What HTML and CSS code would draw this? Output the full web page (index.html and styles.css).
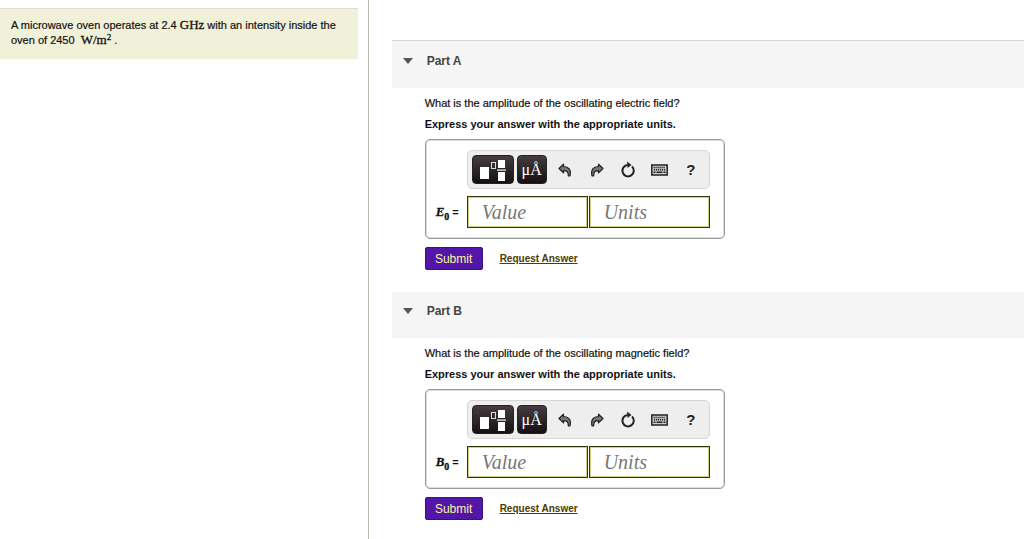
FILE: index.html
```html
<!DOCTYPE html>
<html lang="en">
<head>
  <meta charset="UTF-8" />
  <meta name="viewport" content="width=device-width, initial-scale=1.0"/>
  <title>Microwave Oven Intensity</title>
  <link rel="stylesheet" href="styles.css">
</head>
<body>
  <svg class="icon-defs" aria-hidden="true">
    <symbol id="icon-template" viewBox="0 0 28 24">
      <rect x="1" y="9" width="9" height="12" fill="#fff"/>
      <rect x="12.500" y="4.500" width="4" height="6" fill="none" stroke="#ddd"/>
      <rect x="19" y="2" width="7" height="8" fill="#fff"/>
      <rect x="18" y="11.500" width="9" height="1.200" fill="#fff"/>
      <rect x="19" y="14" width="7" height="9" fill="#fff"/>
    </symbol>
    <symbol id="icon-undo" viewBox="0 0 14 14">
      <path d="M1 5.500 5.500 1.200v2.300c5 0 8 3 6.500 9.300h-1.700C10.500 9 9 7.600 5.500 7.600v2.300z" fill="#777" stroke="#222" stroke-width="1.200" stroke-linejoin="round"/>
    </symbol>
    <symbol id="icon-reset" viewBox="0 0 16 18">
      <path d="M12 5.500A5.700 5.700 0 1 1 7.500 4" fill="none" stroke="#222" stroke-width="2"/>
      <path d="M7 .5 11.500 4 7.500 7z" fill="#222"/>
    </symbol>
    <symbol id="icon-keyboard" viewBox="0 0 17 12">
      <rect x=".8" y="1" width="15.400" height="10" fill="#ccc" stroke="#222" stroke-width="1.500"/>
      <path d="M2.500 3.500h12M3 5.800h12" stroke="#222" stroke-width="1.400" stroke-dasharray="1.200 .8"/>
      <path d="M2.500 8.300h2M5.500 8.300h6M12.500 8.300h2" stroke="#222" stroke-width="1.400"/>
    </symbol>
  </svg>

  <div class="page">
    <aside class="sidebar">
      <div class="intro">A microwave oven operates at 2.4 <span class="math">GHz</span> with an intensity inside the oven of 2450 &nbsp;<span class="math">W/m<sup>2</sup></span> .</div>
    </aside>

    <main class="content">
      <section class="part">
        <header class="part-header part-header-first">
          <span class="arrow"></span>
          <h2>Part A</h2>
        </header>
        <form class="part-body">
          <p class="question">What is the amplitude of the oscillating electric field?</p>
          <p class="instruction">Express your answer with the appropriate units.</p>
          <div class="answer-box">
            <div class="toolbar">
              <button type="button" class="tool-dark tool-template" aria-label="Templates"><svg><use href="#icon-template"/></svg></button>
              <button type="button" class="tool-dark tool-units">μÅ</button>
              <button type="button" class="tool" aria-label="Undo"><svg><use href="#icon-undo"/></svg></button>
              <button type="button" class="tool" aria-label="Redo"><svg class="flip"><use href="#icon-undo"/></svg></button>
              <button type="button" class="tool" aria-label="Reset"><svg class="icon-reset"><use href="#icon-reset"/></svg></button>
              <button type="button" class="tool" aria-label="Keyboard shortcuts"><svg class="icon-keyboard"><use href="#icon-keyboard"/></svg></button>
              <button type="button" class="tool">?</button>
            </div>
            <label class="variable" for="valueA"><span class="math"><i>E</i><sub>0</sub></span> =</label>
            <div class="fields">
              <input type="text" id="valueA" placeholder="Value">
              <input type="text" id="unitsA" placeholder="Units" aria-label="Units">
            </div>
          </div>
          <div class="actions">
            <button type="submit" class="submit">Submit</button>
            <a href="#">Request Answer</a>
          </div>
        </form>
      </section>

      <section class="part">
        <header class="part-header">
          <span class="arrow"></span>
          <h2>Part B</h2>
        </header>
        <form class="part-body">
          <p class="question">What is the amplitude of the oscillating magnetic field?</p>
          <p class="instruction">Express your answer with the appropriate units.</p>
          <div class="answer-box">
            <div class="toolbar">
              <button type="button" class="tool-dark tool-template" aria-label="Templates"><svg><use href="#icon-template"/></svg></button>
              <button type="button" class="tool-dark tool-units">μÅ</button>
              <button type="button" class="tool" aria-label="Undo"><svg><use href="#icon-undo"/></svg></button>
              <button type="button" class="tool" aria-label="Redo"><svg class="flip"><use href="#icon-undo"/></svg></button>
              <button type="button" class="tool" aria-label="Reset"><svg class="icon-reset"><use href="#icon-reset"/></svg></button>
              <button type="button" class="tool" aria-label="Keyboard shortcuts"><svg class="icon-keyboard"><use href="#icon-keyboard"/></svg></button>
              <button type="button" class="tool">?</button>
            </div>
            <label class="variable" for="valueB"><span class="math"><i>B</i><sub>0</sub></span> =</label>
            <div class="fields">
              <input type="text" id="valueB" placeholder="Value">
              <input type="text" id="unitsB" placeholder="Units" aria-label="Units">
            </div>
          </div>
          <div class="actions">
            <button type="submit" class="submit">Submit</button>
            <a href="#">Request Answer</a>
          </div>
        </form>
      </section>
    </main>
  </div>
</body>
</html>
```
FILE: styles.css
```css
:root {
  --text: #111;
  --intro-bg: #f1f1d9;
  --header-bg: #f5f5f5;
  --border: #999;
  --field-border: #36350a;
  --accent: #5217a8;
}

* {
  margin: 0;
  padding: 0;
  box-sizing: border-box;
}

body {
  background: #fff;
  color: var(--text);
  font-family: "Liberation Sans", Arial, sans-serif;
  font-size: 11px;
  line-height: 15px;
}

.icon-defs {
  display: none;
}

.page {
  display: flex;
  min-height: 100vh;
}

.sidebar {
  width: 36%;
  flex-shrink: 0;
  padding: 8px 10px 0 0;
  border-right: 1px solid #b8b8ac;
}

.intro {
  background: var(--intro-bg);
  border-top: 1px solid #dcdccb;
  padding: 9px 16px 11px 11px;
  -webkit-text-stroke: 0.2px var(--text);
}

.math {
  font-family: "Liberation Serif", "Times New Roman", serif;
  font-size: 13px;
  line-height: 1;
  -webkit-text-stroke: 0.3px var(--text);
}

.math sup,
.math sub {
  font-size: 10px;
  line-height: 0;
}

.math sup {
  font-size: 9px;
  vertical-align: 4px;
}

.content {
  flex: 1;
  padding: 40px 0 0 23px;
}

.part {
  margin-bottom: 22px;
}

.part-header {
  display: flex;
  align-items: flex-start;
  gap: 14px;
  height: 46px;
  padding: 11px 11px 0;
  background: var(--header-bg);
}

.part-header-first {
  height: 48px;
  padding-top: 12px;
  border-top: 1px solid #d4d4d4;
}

.part-header h2 {
  font-size: 12px;
  line-height: 16px;
  color: #444;
}

.arrow {
  margin-top: 5px;
  border: 5px solid transparent;
  border-top: 6px solid #555;
  border-bottom: none;
}

.part-body {
  padding: 8px 0 0 33px;
}

.question {
  -webkit-text-stroke: 0.2px var(--text);
}

.instruction {
  margin: 6px 0 7px;
  font-weight: bold;
}

.answer-box {
  display: inline-grid;
  grid-template-columns: 31px 243px;
  row-gap: 7px;
  align-items: center;
  padding: 10px 14px 10px 10px;
  border: 1px solid var(--border);
  box-shadow: inset 0 0 0 1px #ddd;
  border-radius: 5px;
  vertical-align: top;
}

.toolbar {
  grid-column: 2;
  display: flex;
  align-items: center;
  height: 39px;
  padding: 0 2px 0 4px;
  background: #eee;
  border: 1px solid #d6d6d6;
  border-radius: 5px;
}

.toolbar button {
  height: 29px;
  border: none;
  background: none;
  display: flex;
  align-items: center;
  justify-content: center;
  cursor: pointer;
}

.toolbar .tool-dark {
  background: linear-gradient(#463c3f, #151013);
  border: 1px solid #222;
  border-radius: 4px;
  color: #fff;
}

.toolbar .tool-template {
  width: 42px;
  margin-right: 3px;
}

.tool-template svg {
  width: 28px;
  height: 24px;
}

.toolbar .tool-units {
  width: 30px;
  margin-right: 3px;
  font-family: "Liberation Serif", "Times New Roman", serif;
  font-size: 16px;
}

.tool {
  flex: 1;
  color: #222;
  font-family: "Liberation Sans", Arial, sans-serif;
  font-size: 15px;
  font-weight: bold;
}

.tool svg {
  width: 14px;
  height: 14px;
}

.tool .flip {
  transform: scaleX(-1);
}

.tool .icon-reset {
  width: 16px;
  height: 18px;
}

.tool .icon-keyboard {
  width: 17px;
  height: 12px;
}

.variable {
  font-weight: bold;
  white-space: nowrap;
}

.fields {
  display: grid;
  grid-template-columns: 1fr 1fr;
  gap: 1px;
}

.fields input {
  width: 100%;
  height: 32px;
  padding: 0 14px;
  border: 1px solid var(--field-border);
  box-shadow: inset 0 0 0 1px #cfcf86;
  background: #fff;
  color: var(--text);
  font-family: "Liberation Serif", "Times New Roman", serif;
  font-size: 20px;
}

.fields input::placeholder {
  color: #777;
  font-style: italic;
}

.actions {
  display: flex;
  align-items: center;
  gap: 17px;
  margin-top: 8px;
}

.submit {
  width: 58px;
  height: 23px;
  background: var(--accent);
  border: 1px solid #3a1180;
  border-radius: 2px;
  color: #fff3a0;
  font-family: "Liberation Sans", Arial, sans-serif;
  font-size: 12px;
  cursor: pointer;
}

.actions a {
  color: #4a4000;
  font-weight: bold;
  font-size: 10px;
}
```
